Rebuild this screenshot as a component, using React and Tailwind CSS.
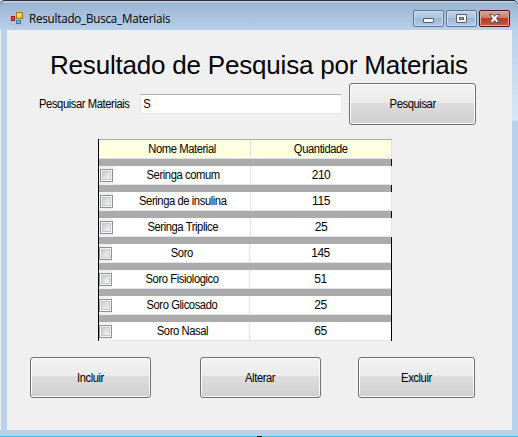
import React from "react";

const rows = [
  ["Seringa comum", "210"],
  ["Seringa de insulina", "115"],
  ["Seringa Triplice", "25"],
  ["Soro", "145"],
  ["Soro Fisiologico", "51"],
  ["Soro Glicosado", "25"],
  ["Soro Nasal", "65"],
];

function Label({ children, className = "scale-x-[0.935]" }) {
  return (
    <span className={`inline-block whitespace-nowrap text-[12px] leading-[14px] tracking-[-0.45px] ${className}`}>
      {children}
    </span>
  );
}

function Button({ children, className }) {
  return (
    <button
      className={`flex shrink-0 items-center justify-center rounded-[3px] border border-[#707070] bg-[linear-gradient(#f2f2f2_0%,#ebebeb_46%,#dddddd_47%,#cfcfcf_100%)] shadow-[inset_0_0_0_1px_#fbfbfb] ${className}`}
    >
      <Label>{children}</Label>
    </button>
  );
}

function FormIcon() {
  return (
    <svg width="14" height="14" viewBox="0 0 14 14" className="shrink-0">
      <defs>
        <linearGradient id="gold" x1="0" y1="0" x2="1" y2="1">
          <stop offset="0" stopColor="#fff3a0" />
          <stop offset="1" stopColor="#f0b000" />
        </linearGradient>
      </defs>
      <rect x="0.5" y="0.5" width="13" height="13" fill="none" stroke="#b4bcc6" />
      <rect x="6.5" y="1.5" width="6" height="6" fill="url(#gold)" stroke="#a87808" />
      <rect x="1.5" y="5.5" width="3" height="4" fill="#e34234" stroke="#a01818" />
      <rect x="6.5" y="9.5" width="4" height="3" fill="#78b4f5" stroke="#3b72c4" />
    </svg>
  );
}

function CaptionButton({ kind }) {
  const close = kind === "close";
  return (
    <div
      className={`flex h-[17px] w-[31px] items-center justify-center rounded-[2px] border ${
        close
          ? "border-[#4c1320] bg-[linear-gradient(#dfa397_0%,#cf7867_46%,#b83b25_48%,#c95640_100%)] shadow-[inset_0_0_0_1px_#e3a99f]"
          : "border-[#5e7591] bg-[linear-gradient(#bed1e6_0%,#adc5df_46%,#9bb7d4_48%,#b0cbe7_100%)] shadow-[inset_0_0_0_1px_#cbdcef]"
      }`}
    >
      <svg width="13" height="11" viewBox="0 0 13 11">
        {kind === "min" && <rect x="1.5" y="5.5" width="10" height="4" rx="0.5" fill="#f7f7f7" stroke="#575c66" />}
        {kind === "max" && (
          <>
            <rect x="1.5" y="1.5" width="10" height="8" rx="0.5" fill="#f7f7f7" stroke="#575c66" />
            <rect x="4.5" y="4.5" width="4" height="2" fill="#91afcf" stroke="#575c66" />
          </>
        )}
        {close && (
          <path
            d="M1.5 1.5h3.4l1.6 2 1.6-2h3.4L8.5 5.4l3 4.1H8.1l-1.6-2-1.6 2H1.5l3-4.1z"
            fill="#f8f8f8"
            stroke="#555a68"
            strokeLinejoin="round"
          />
        )}
      </svg>
    </div>
  );
}

function CheckBox() {
  return (
    <span className="block size-[13px] shrink-0 border border-[#8e8f8f] bg-[#f6f6f6] p-px">
      <span className="block size-full border border-[#c3c8d0] bg-[linear-gradient(135deg,#c6cad2,#f6f6f6)]" />
    </span>
  );
}

function Row({ name, amount, index }) {
  const late = index > 2;
  return (
    <div>
      <div className="h-[7px] border-r border-black bg-[#ababab]" />
      <div className={`flex h-[19px] border-r ${late ? "border-black" : "border-[#e2e2ea]"}`}>
        <div className={`flex shrink-0 items-center bg-[#f0f0f0] ${late ? "w-[13px]" : "w-[14px] pl-px"}`}>
          <CheckBox />
        </div>
        <div className="flex w-[138px] items-center justify-center border-r border-b border-[#e0e3ec] bg-white pl-[3px]">
          <Label>{name}</Label>
        </div>
        <div className="flex flex-1 items-center justify-center border-b border-[#e0e3ec] bg-white">
          <Label className="">{amount}</Label>
        </div>
      </div>
    </div>
  );
}

export default function App() {
  return (
    <div className="flex h-[437px] w-[518px] flex-col overflow-hidden bg-[#b9d1ea] font-['Liberation_Sans',Arial,sans-serif] text-black">
      <header className="flex h-[30px] shrink-0 items-start rounded-t-[5px] border-t border-[#2d2d35] bg-[linear-gradient(#d7e4f2_0px,#99b4d1_2px,#b9d1ea_29px)] pr-[8px] pl-[10px]">
        <div className="flex pt-[10px]">
          <FormIcon />
        </div>
        <span className="mt-[10px] ml-[5px] origin-left scale-x-[0.965] font-['Open_Sans','Noto_Sans',sans-serif] text-[12px] leading-[16px] tracking-[-0.2px] whitespace-nowrap">
          Resultado_Busca_Materiais
        </span>
        <div className="ml-auto flex gap-[2px] pt-[9px]">
          <CaptionButton kind="min" />
          <CaptionButton kind="max" />
          <CaptionButton kind="close" />
        </div>
      </header>

      <div className="flex h-[400px] shrink-0">
        <div className="w-[7px] shrink-0 border-l border-[#e8f1fa] bg-[#b9d1ea]" />
        <main className="w-[505px] shrink-0 bg-[#f0f0f0]">
          <h1 className="h-[53px] pt-[20px] pl-[43px] text-[26px] leading-[30px] tracking-[-0.2px] whitespace-nowrap">
            Resultado de Pesquisa por Materiais
          </h1>
          <div className="flex h-[42px] items-center pl-[32px]">
            <Label className="w-[101px] origin-left scale-x-[0.935]">Pesquisar Materiais</Label>
            <div className="flex h-[20px] w-[202px] items-center rounded-[1px] border border-[#e2e3ea] border-t-[#abadb3] bg-white pl-[2px]">
              <Label>S</Label>
            </div>
            <Button className="ml-[7px] h-[42px] w-[127px]">Pesquisar</Button>
          </div>

          <div className="mt-[14px] ml-[91px] h-[202px] w-[294px] border-l border-black">
            <div className="flex h-[20px] border-t border-b border-t-[#a9a9a9] border-b-[#dfe1e8] bg-[#ffffe1]">
              <div className="flex w-[152px] items-center justify-center border-r border-[#e0e3ec] pl-[16px]">
                <Label>Nome Material</Label>
              </div>
              <div className="flex flex-1 items-center justify-center border-r border-[#e2e2ea]">
                <Label>Quantidade</Label>
              </div>
            </div>
            {rows.map(([name, amount], i) => (
              <Row key={name} name={name} amount={amount} index={i} />
            ))}
          </div>

          <div className="mt-[16px] flex pl-[23px]">
            <Button className="h-[41px] w-[121px]">Incluir</Button>
            <Button className="ml-[49px] h-[41px] w-[121px]">Alterar</Button>
            <Button className="ml-[37px] h-[41px] w-[117px]">Excluir</Button>
          </div>
        </main>
        <div className="w-[6px] shrink-0 bg-[linear-gradient(#b9d1ea_0px,#d8e6f5_88px,#d8e6f5_90px,#b9d1ea_91px)]" />
      </div>

      <footer className="flex h-[7px] items-end">
        <div className="h-px w-[257px] bg-[#36c4df]" />
        <div className="h-px w-[5px] bg-black" />
        <div className="h-px flex-1 bg-[#36c4df]" />
      </footer>
    </div>
  );
}
